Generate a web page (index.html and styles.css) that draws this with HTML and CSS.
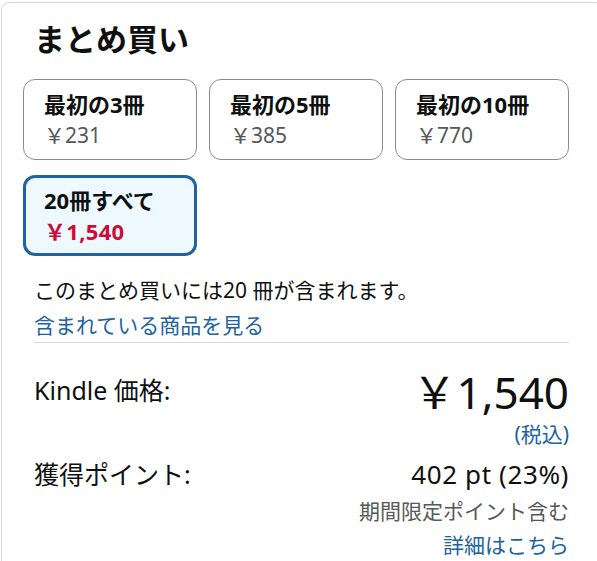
FILE: index.html
```html
<!DOCTYPE html>
<html lang="ja">
<head>
  <meta charset="UTF-8">
  <title>まとめ買い</title>
  <meta name="viewport" content="width=device-width,initial-scale=1.0">
  <link rel="stylesheet" href="styles.css">
</head>
<body>
  <div class="card">
    <h2 class="title">まとめ買い</h2>

    <div class="swatches">
      <div class="swatch"><div class="sw-name">最初の3冊</div><div class="sw-price">￥231</div></div>
      <div class="swatch"><div class="sw-name">最初の5冊</div><div class="sw-price">￥385</div></div>
      <div class="swatch"><div class="sw-name">最初の10冊</div><div class="sw-price">￥770</div></div>
      <div class="swatch selected"><div class="sw-name">20冊すべて</div><div class="sw-price">￥1,540</div></div>
    </div>

    <p class="count">このまとめ買いには20 冊が含まれます。</p>
    <a class="link" href="#">含まれている商品を見る</a>
    <hr class="divider">

    <div class="row price-row">
      <span class="label">Kindle 価格:</span>
      <span class="price">￥1,540</span>
    </div>
    <div class="right tax"><a class="link" href="#">(税込)</a></div>

    <div class="row points-row">
      <span class="label">獲得ポイント:</span>
      <span class="points">402 pt (23%)</span>
    </div>
    <div class="right note">期間限定ポイント含む</div>
    <div class="right more"><a class="link" href="#">詳細はこちら</a></div>
  </div>
</body>
</html>
```

FILE: styles.css
```css
body{margin:0;background:#fff;color:#0f1111;font-family:"Noto Sans","Noto Sans CJK JP",sans-serif;overflow:hidden;}

/* outer box - runs off the right edge */
.card{
  margin:2px 0 0 1px;width:535px;
  padding:18px 32px 20px 32px;
  border:1px solid #d5d9d9;border-radius:8px;
}
.title{margin:0;font-size:31px;line-height:36px;font-weight:700;}

/* swatches */
.swatches{
  display:grid;grid-template-columns:repeat(3,1fr);gap:15px 12px;
  margin:22px 0 0 -11px;
}
.swatch{
  padding:11px 20px;border:1px solid #888c8c;border-radius:12px;background:#fff;
}
.swatch.selected{padding:9px 18px;border:3px solid #2162a1;background:#edf8ff;}
.sw-name{font-size:22px;line-height:26px;font-weight:700;}
.sw-price{margin-top:5px;font-size:21px;line-height:26px;color:#565959;}
.selected .sw-price{color:#cc0c39;font-weight:700;font-size:22px;letter-spacing:.3px;}

/* text */
.count{margin:19px 0 0;font-size:21px;line-height:30px;}
.link{color:#2162a1;text-decoration:none;font-size:21px;line-height:30px;}
.card > .link{display:block;margin-top:5px;}
.divider{margin:2px 0 0;border:0;border-top:1px solid #d5d9d9;}

/* price rows */
.row{display:flex;justify-content:space-between;align-items:flex-start;}
.label{font-size:25px;line-height:32px;}
.price-row{margin-top:25px;}
.price-row .label{margin-top:6px;}
.price{font-size:44px;line-height:48px;}
.right{text-align:right;font-size:21px;line-height:28px;}
.right .link{line-height:28px;}
.tax{margin-top:4px;}
.points-row{margin-top:10px;}
.points{font-size:26px;line-height:32px;letter-spacing:.6px;}
.note{margin-top:7px;color:#565959;}
.more{margin-top:6px;}
```
